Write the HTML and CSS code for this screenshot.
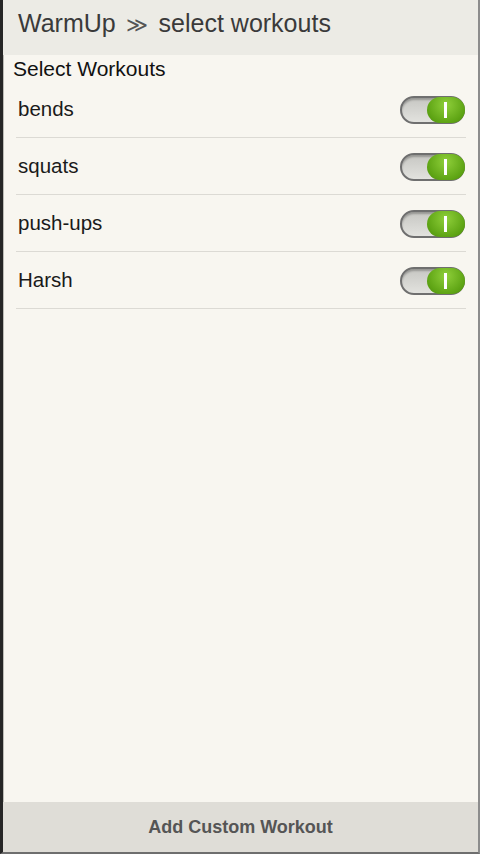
FILE: index.html
```html
<!DOCTYPE html>
<html>
<head>
<meta charset="utf-8">
<link rel="stylesheet" href="styles.css">
</head>
<body>
<div class="app">
  <header class="header">WarmUp <span class="sep">≫</span> select workouts</header>
  <main class="content">
    <div class="section-title">Select Workouts</div>
    <ul class="list">
      <li class="row"><span class="label">bends</span><span class="toggle"><span class="knob"></span></span></li>
      <li class="row"><span class="label">squats</span><span class="toggle"><span class="knob"></span></span></li>
      <li class="row"><span class="label">push-ups</span><span class="toggle"><span class="knob"></span></span></li>
      <li class="row"><span class="label">Harsh</span><span class="toggle"><span class="knob"></span></span></li>
    </ul>
  </main>
  <footer class="footer">Add Custom Workout</footer>
</div>
</body>
</html>
```
FILE: styles.css
```css
html, body {
  margin: 0;
  padding: 0;
  height: 100%;
}
body {
  background: #2a2a2a;
  font-family: "Liberation Sans", Arial, sans-serif;
}
.app {
  box-sizing: border-box;
  height: 854px;
  width: 480px;
  display: flex;
  flex-direction: column;
  background: #f8f6f0;
  border-left: 3px solid #262626;
  border-right: 2px solid #8c8c8c;
  border-bottom: 2px solid #6e6e6e;
  box-shadow: inset 1px 0 0 #bdbcb6;
}
.header {
  height: 55px;
  flex: none;
  box-sizing: border-box;
  padding: 8px 0 0 15px;
  background: #ecebe5;
  color: #3a3a3a;
  font-size: 25px;
  line-height: 30px;
}
.sep {
  font-size: 21px;
  color: #555;
  margin: 0 4px 0 3px;
}
.content {
  flex: 1;
  padding: 0 12px 0 10px;
}
.section-title {
  font-size: 21px;
  color: #111;
  padding-top: 2px;
  height: 24px;
  line-height: 24px;
}
.list {
  list-style: none;
  margin: 0;
  padding: 0 0 0 3px;
}
.row {
  display: flex;
  align-items: center;
  justify-content: space-between;
  height: 56px;
  border-bottom: 1px solid #dcdad4;
  padding-left: 2px;
}
.label {
  font-size: 20.5px;
  color: #1a1a1a;
}
.toggle {
  position: relative;
  box-sizing: border-box;
  width: 65px;
  height: 28px;
  border-radius: 14px;
  border: 2px solid #6f6f6f;
  background: linear-gradient(#c7c7c3, #e2e2de);
  box-shadow: inset 0 2px 2px rgba(0,0,0,0.25);
  margin-right: 1px;
  margin-top: 1px;
}
.knob {
  position: absolute;
  right: -2px;
  top: -1px;
  width: 38px;
  height: 26px;
  border-radius: 13px;
  background: radial-gradient(ellipse at 50% 30%, #8fcf3a, #5ea414 70%, #4c8a0c);
}
.knob::after {
  content: "";
  position: absolute;
  left: 17px;
  top: 5px;
  width: 3px;
  height: 16px;
  background: #fff;
}
.footer {
  flex: none;
  height: 50px;
  display: flex;
  align-items: center;
  justify-content: center;
  background: #dfddd7;
  color: #555;
  font-weight: bold;
  font-size: 18px;
}
```
